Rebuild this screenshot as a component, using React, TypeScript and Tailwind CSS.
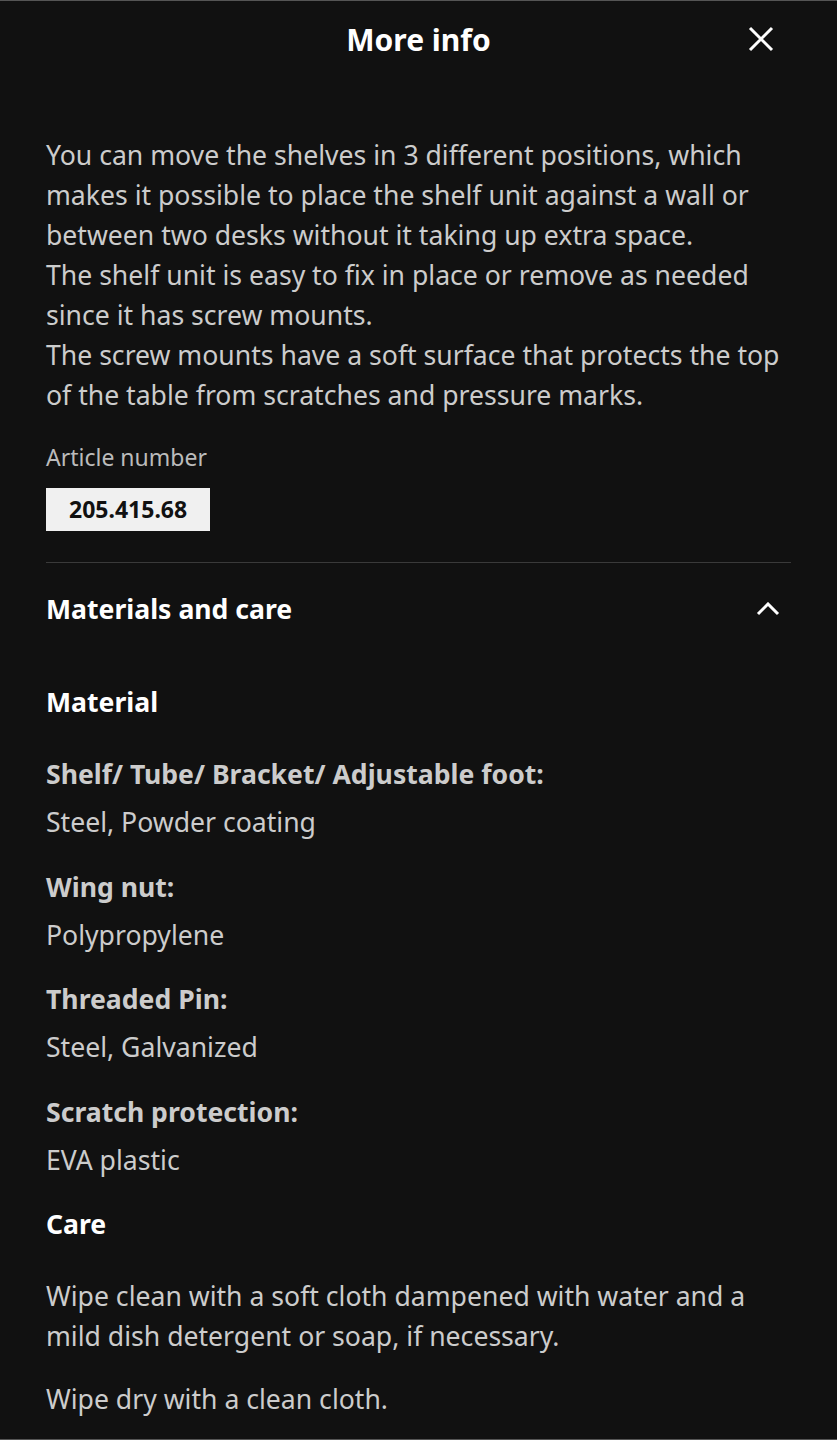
import React from "react";

const font = { fontFamily: '"Noto Sans", "Open Sans", sans-serif' };

function Item({ label, value, first }: { label: string; value: string; first?: boolean }) {
  return (
    <div className={first ? "mt-[32px]" : "mt-[24.5px]"}>
      <div className="text-[26.6px] leading-[40px] font-bold text-[#cccccc]">{label}</div>
      <div className="mt-[8px] text-[26.6px] leading-[40px] text-[#cccccc]">{value}</div>
    </div>
  );
}

export default function App() {
  return (
    <div
      className="w-[837px] h-[1440px] bg-[#111111] border-t border-b border-[#555555] overflow-hidden"
      style={font}
    >
      <header className="h-[78px] grid grid-cols-[1fr_auto_1fr] items-center">
        <div />
        <h1 className="text-[30px] font-bold text-white leading-[40px]">More info</h1>
        <div className="flex justify-end pr-[52px]">
          <button className="mb-[2px] w-[48px] h-[48px] flex items-center justify-center text-white">
            <svg width="26" height="26" viewBox="0 0 26 26" fill="none" stroke="currentColor" strokeWidth="3">
              <path d="M2 2 L24 24 M24 2 L2 24" />
            </svg>
          </button>
        </div>
      </header>

      <main className="px-[46px]">
        <p className="pt-[56px] text-[26.6px] leading-[40px] text-[#cccccc]">
          You can move the shelves in 3 different positions, which makes it possible to place the shelf unit against a wall or between two desks without it taking up extra space.
          <br />
          The shelf unit is easy to fix in place or remove as needed since it has screw mounts.
          <br />
          The screw mounts have a soft surface that protects the top of the table from scratches and pressure marks.
        </p>

        <div className="mt-[27px] text-[23px] leading-[30px] text-[#bbbbbb]">Article number</div>
        <div className="mt-[16px] inline-flex h-[43px] items-center bg-[#f0f0f0] px-[23px] text-[23px] font-bold text-[#111111]">
          205.415.68
        </div>

        <div className="mt-[31px] border-t border-[#3a3a3a]" />

        <div className="h-[92px] flex items-center justify-between">
          <h2 className="text-[26.6px] font-bold text-white leading-[40px]">Materials and care</h2>
          <svg className="mr-[11px]" width="24" height="14" viewBox="0 0 24 14" fill="none" stroke="white" strokeWidth="3">
            <path d="M2 12 L12 2 L22 12" />
          </svg>
        </div>

        <section className="mt-[27px]">
          <h3 className="text-[26.6px] leading-[40px] font-bold text-white">Material</h3>
          <div>
            <Item first label="Shelf/ Tube/ Bracket/ Adjustable foot:" value="Steel, Powder coating" />
            <Item label="Wing nut:" value="Polypropylene" />
            <Item label="Threaded Pin:" value="Steel, Galvanized" />
            <Item label="Scratch protection:" value="EVA plastic" />
          </div>
          <h3 className="mt-[24px] text-[26.6px] leading-[40px] font-bold text-white">Care</h3>
          <p className="mt-[32px] text-[26.6px] leading-[40px] text-[#cccccc]">
            Wipe clean with a soft cloth dampened with water and a mild dish detergent or soap, if necessary.
          </p>
          <p className="mt-[23px] text-[26.6px] leading-[40px] text-[#cccccc]">Wipe dry with a clean cloth.</p>
        </section>
      </main>
    </div>
  );
}
